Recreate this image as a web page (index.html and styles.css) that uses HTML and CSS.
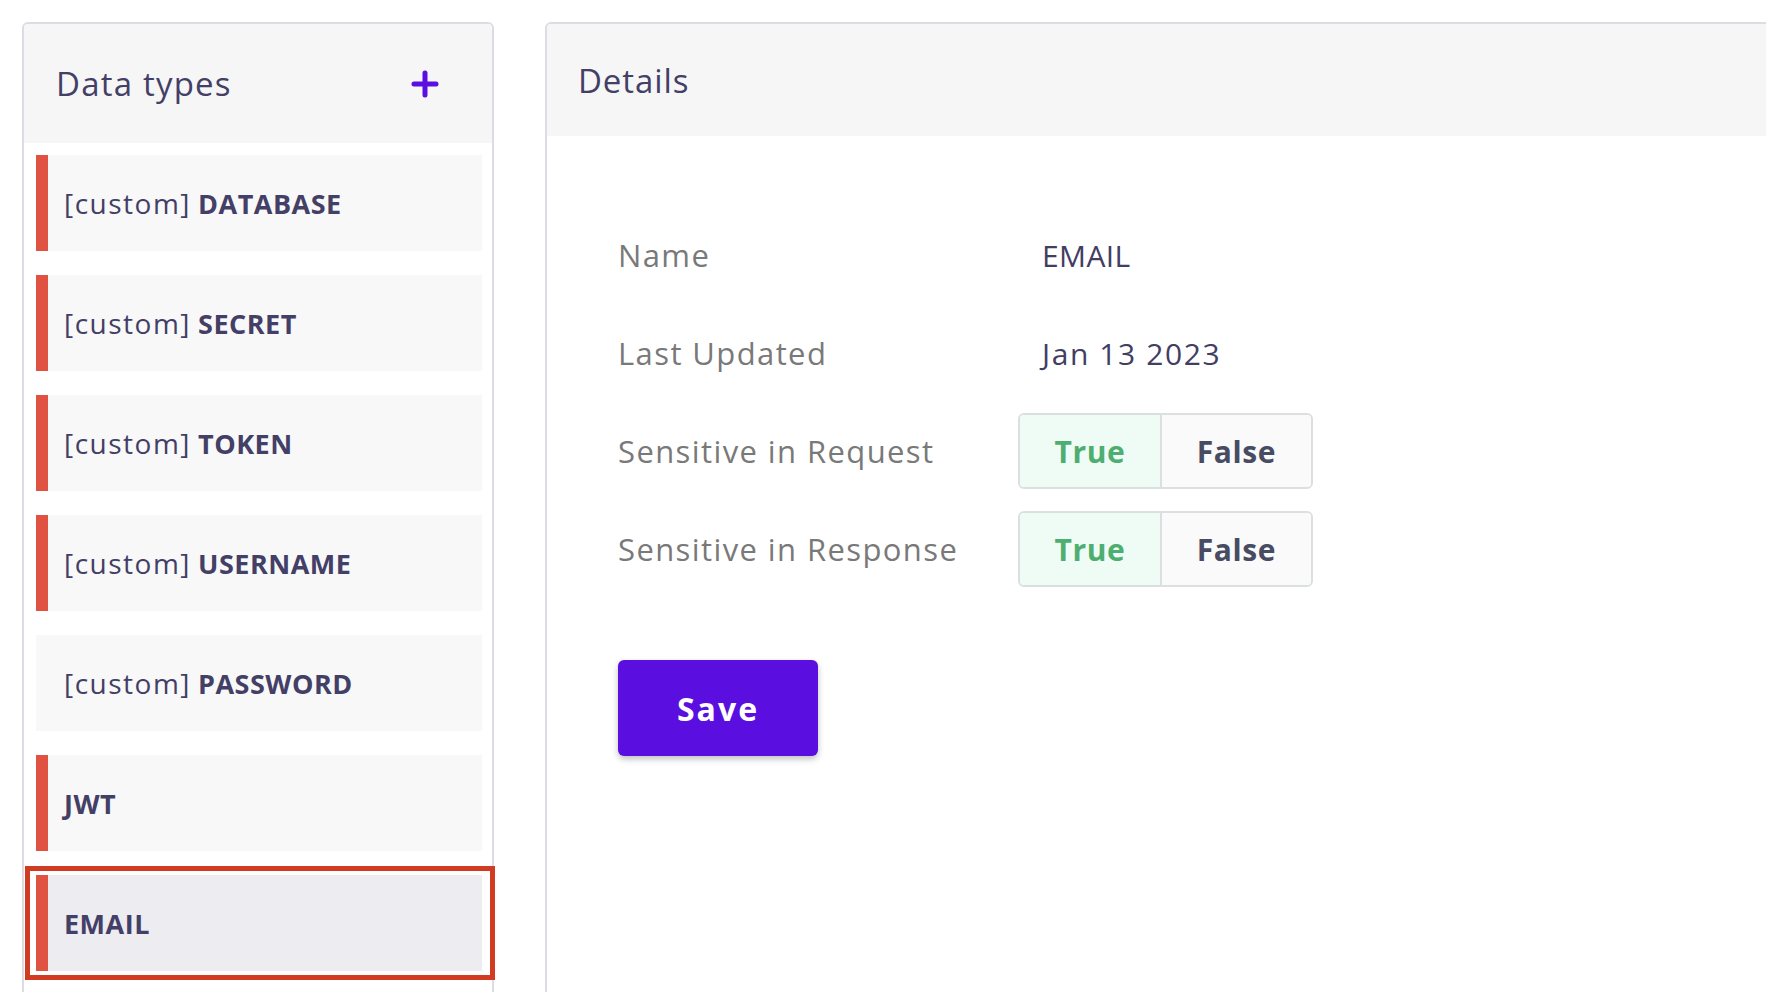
FILE: index.html
```html
<!DOCTYPE html>
<html lang="en">
<head>
<meta charset="utf-8">
<title>Data types</title>
<link rel="stylesheet" href="styles.css">
</head>
<body>
<div class="page">
  <aside class="panel types">
    <div class="panel-head">
      <h2 class="title">Data types</h2>
      <button class="add" aria-label="Add">
        <svg width="28" height="28" viewBox="0 0 28 28"><path d="M14 3v22M3 14h22" stroke="#5a0fe0" stroke-width="5" stroke-linecap="round" fill="none"/></svg>
      </button>
    </div>
    <ul class="type-list">
      <li class="type-item flagged"><span class="txt"><span class="pre">[custom]</span> <b>DATABASE</b></span></li>
      <li class="type-item flagged"><span class="txt"><span class="pre">[custom]</span> <b>SECRET</b></span></li>
      <li class="type-item flagged"><span class="txt"><span class="pre">[custom]</span> <b>TOKEN</b></span></li>
      <li class="type-item flagged"><span class="txt"><span class="pre">[custom]</span> <b>USERNAME</b></span></li>
      <li class="type-item"><span class="txt"><span class="pre">[custom]</span> <b>PASSWORD</b></span></li>
      <li class="type-item flagged"><span class="txt"><b>JWT</b></span></li>
      <li class="type-item flagged selected"><span class="txt"><b>EMAIL</b></span></li>
    </ul>
  </aside>
  <section class="panel details">
    <div class="panel-head">
      <h2 class="title">Details</h2>
    </div>
    <div class="details-body">
      <div class="rows">
        <div class="label">Name</div>
        <div class="value">EMAIL</div>
        <div class="label">Last Updated</div>
        <div class="value date">Jan 13 2023</div>
        <div class="label">Sensitive in Request</div>
        <div class="toggle"><span class="opt on">True</span><span class="opt off">False</span></div>
        <div class="label">Sensitive in Response</div>
        <div class="toggle"><span class="opt on">True</span><span class="opt off">False</span></div>
      </div>
      <button class="save">Save</button>
    </div>
  </section>
</div>
</body>
</html>
```
FILE: styles.css
```css
html, body {
  margin: 0;
  height: 100%;
  overflow: hidden;
  background: #ffffff;
}
body {
  font-family: "Open Sans", "Noto Sans", sans-serif;
  color: #434065;
}
.page {
  display: flex;
  align-items: flex-start;
  gap: 51px;
  padding: 22px 0 0 22px;
}
.panel {
  box-sizing: border-box;
  border: 2px solid #dcdce2;
  border-radius: 6px;
  background: #fff;
  min-height: 1100px;
  flex-shrink: 0;
}
.types { width: 472px; }
.details { width: 1400px; }
.panel-head {
  display: flex;
  align-items: center;
  justify-content: space-between;
  background: #f6f6f6;
  border-radius: 4px 4px 0 0;
}
.types .panel-head {
  height: 119px;
  padding: 0 53px 0 32px;
}
.details .panel-head {
  height: 112px;
  padding: 0 0 0 31px;
}
.title {
  margin: 0;
  font-size: 33px;
  font-weight: 500;
  color: #433f66;
  letter-spacing: 1.2px;
}
.details .title { letter-spacing: 0.9px; }
.add {
  border: 0;
  background: none;
  padding: 0;
  width: 28px;
  height: 28px;
  display: flex;
}
.type-list {
  list-style: none;
  margin: 0;
  padding: 12px 10px 12px 12px;
  display: flex;
  flex-direction: column;
  gap: 24px;
}
.type-item {
  position: relative;
  box-sizing: border-box;
  height: 96px;
  display: flex;
  align-items: center;
  padding-left: 16px;
  background: #f8f8f8;
  border-left: 12px solid transparent;
  font-size: 27px;
  color: #433f66;
}
.type-item .txt { white-space: pre; }
.type-item .pre { font-size: 28px; font-weight: 400; letter-spacing: 1.5px; }
.type-item b { font-weight: 700; letter-spacing: 0.5px; }
.type-item.flagged { border-left-color: #e05343; }
.type-item.selected { background: #ececf1; }
.type-item.selected::after {
  content: "";
  position: absolute;
  top: -9px;
  bottom: -9px;
  left: -23px;
  right: -13px;
  border: 5px solid #d03b22;
}
.details-body {
  padding: 81px 0 0 71px;
}
.rows {
  display: grid;
  grid-template-columns: 400px auto;
  grid-auto-rows: 76px;
  row-gap: 22px;
  align-items: center;
  justify-items: start;
}
.label {
  font-size: 31px;
  color: #797979;
  letter-spacing: 1.4px;
}
.value {
  font-size: 30px;
  color: #413d63;
  padding-left: 24px;
  letter-spacing: 0.4px;
}
.value.date { letter-spacing: 1.6px; }
.toggle {
  display: flex;
  box-sizing: border-box;
  height: 76px;
  border: 2px solid #dcdfe0;
  border-radius: 6px;
  overflow: hidden;
}
.opt {
  display: flex;
  align-items: center;
  justify-content: center;
  font-size: 30px;
  font-weight: 700;
  letter-spacing: 0.6px;
}
.opt.on {
  width: 140px;
  background: #effcf5;
  color: #4dae70;
  border-right: 2px solid #dcdfe0;
}
.opt.off {
  width: 149px;
  background: #fafafa;
  color: #474c63;
}
.save {
  margin-top: 73px;
  width: 200px;
  height: 96px;
  border: 0;
  border-radius: 6px;
  background: #5a0ee0;
  color: #ffffff;
  font-family: "Open Sans", "Noto Sans", sans-serif;
  font-size: 32px;
  font-weight: 700;
  letter-spacing: 2px;
  box-shadow: 0 3px 6px rgba(0, 0, 0, 0.25);
}
```
